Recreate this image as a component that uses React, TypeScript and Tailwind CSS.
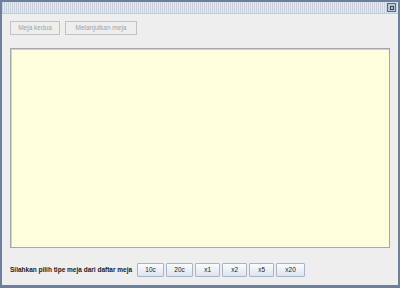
export default function App() {
  const bets = [
    { label: '10c', w: 'w-[27px]' },
    { label: '20c', w: 'w-[27px]' },
    { label: 'x1', w: 'w-[25px]' },
    { label: 'x2', w: 'w-[25px]' },
    { label: 'x5', w: 'w-[25px]' },
    { label: 'x20', w: 'w-[29px]' },
  ];
  return (
    <div
      className="w-[400px] h-[288px] bg-[#6e7f99] p-[2px] pb-[3px] flex flex-col"
      style={{ fontFamily: '"Liberation Sans", Arial, sans-serif' }}
    >
      {/* title bar */}
      <div className="h-[11px] bg-[#e4e8ef] flex items-center justify-end pr-[2px] bg-[repeating-linear-gradient(90deg,#c9d1dd_0px,#c9d1dd_1px,transparent_1px,transparent_2px)]">
        <div className="w-[9px] h-[9px] border border-[#5a6d88] bg-[#b7c2d2] flex items-center justify-center">
          <div className="w-[4px] h-[4px] border border-[#34465f]" />
        </div>
      </div>
      <div className="flex-1 bg-[#eeeeee] border-t border-[#c4ccd8] flex flex-col px-[8px]">
        <div className="flex gap-[5px] mt-[7px]">
          <button className="h-[14px] w-[50px] border border-[#c2c2c2] bg-[#eeeeee] text-[6.5px] text-[#a3a3a3]">
            Meja kedua
          </button>
          <button className="h-[14px] w-[72px] border border-[#c2c2c2] bg-[#eeeeee] text-[6.5px] text-[#a3a3a3]">
            Melanjutkan meja
          </button>
        </div>
        <div className="mt-[13px] h-[200px] bg-[#ffffdd] border border-[#a8a8a8] shadow-[inset_1px_1px_0_#d0d0d0]" />
        <div className="flex items-center mt-[15px] gap-[2px]">
          <span className="text-[6.5px] font-bold text-[#222] mr-[3px]">
            Silahkan pilih tipe meja dari daftar meja
          </span>
          {bets.map((b) => (
            <button
              key={b.label}
              className={`h-[14px] ${b.w} border border-[#a9b4c4] bg-[linear-gradient(#fafcff,#dbe5f1)] text-[6.5px] text-[#222] rounded-[1px]`}
            >
              {b.label}
            </button>
          ))}
        </div>
      </div>
    </div>
  );
}
